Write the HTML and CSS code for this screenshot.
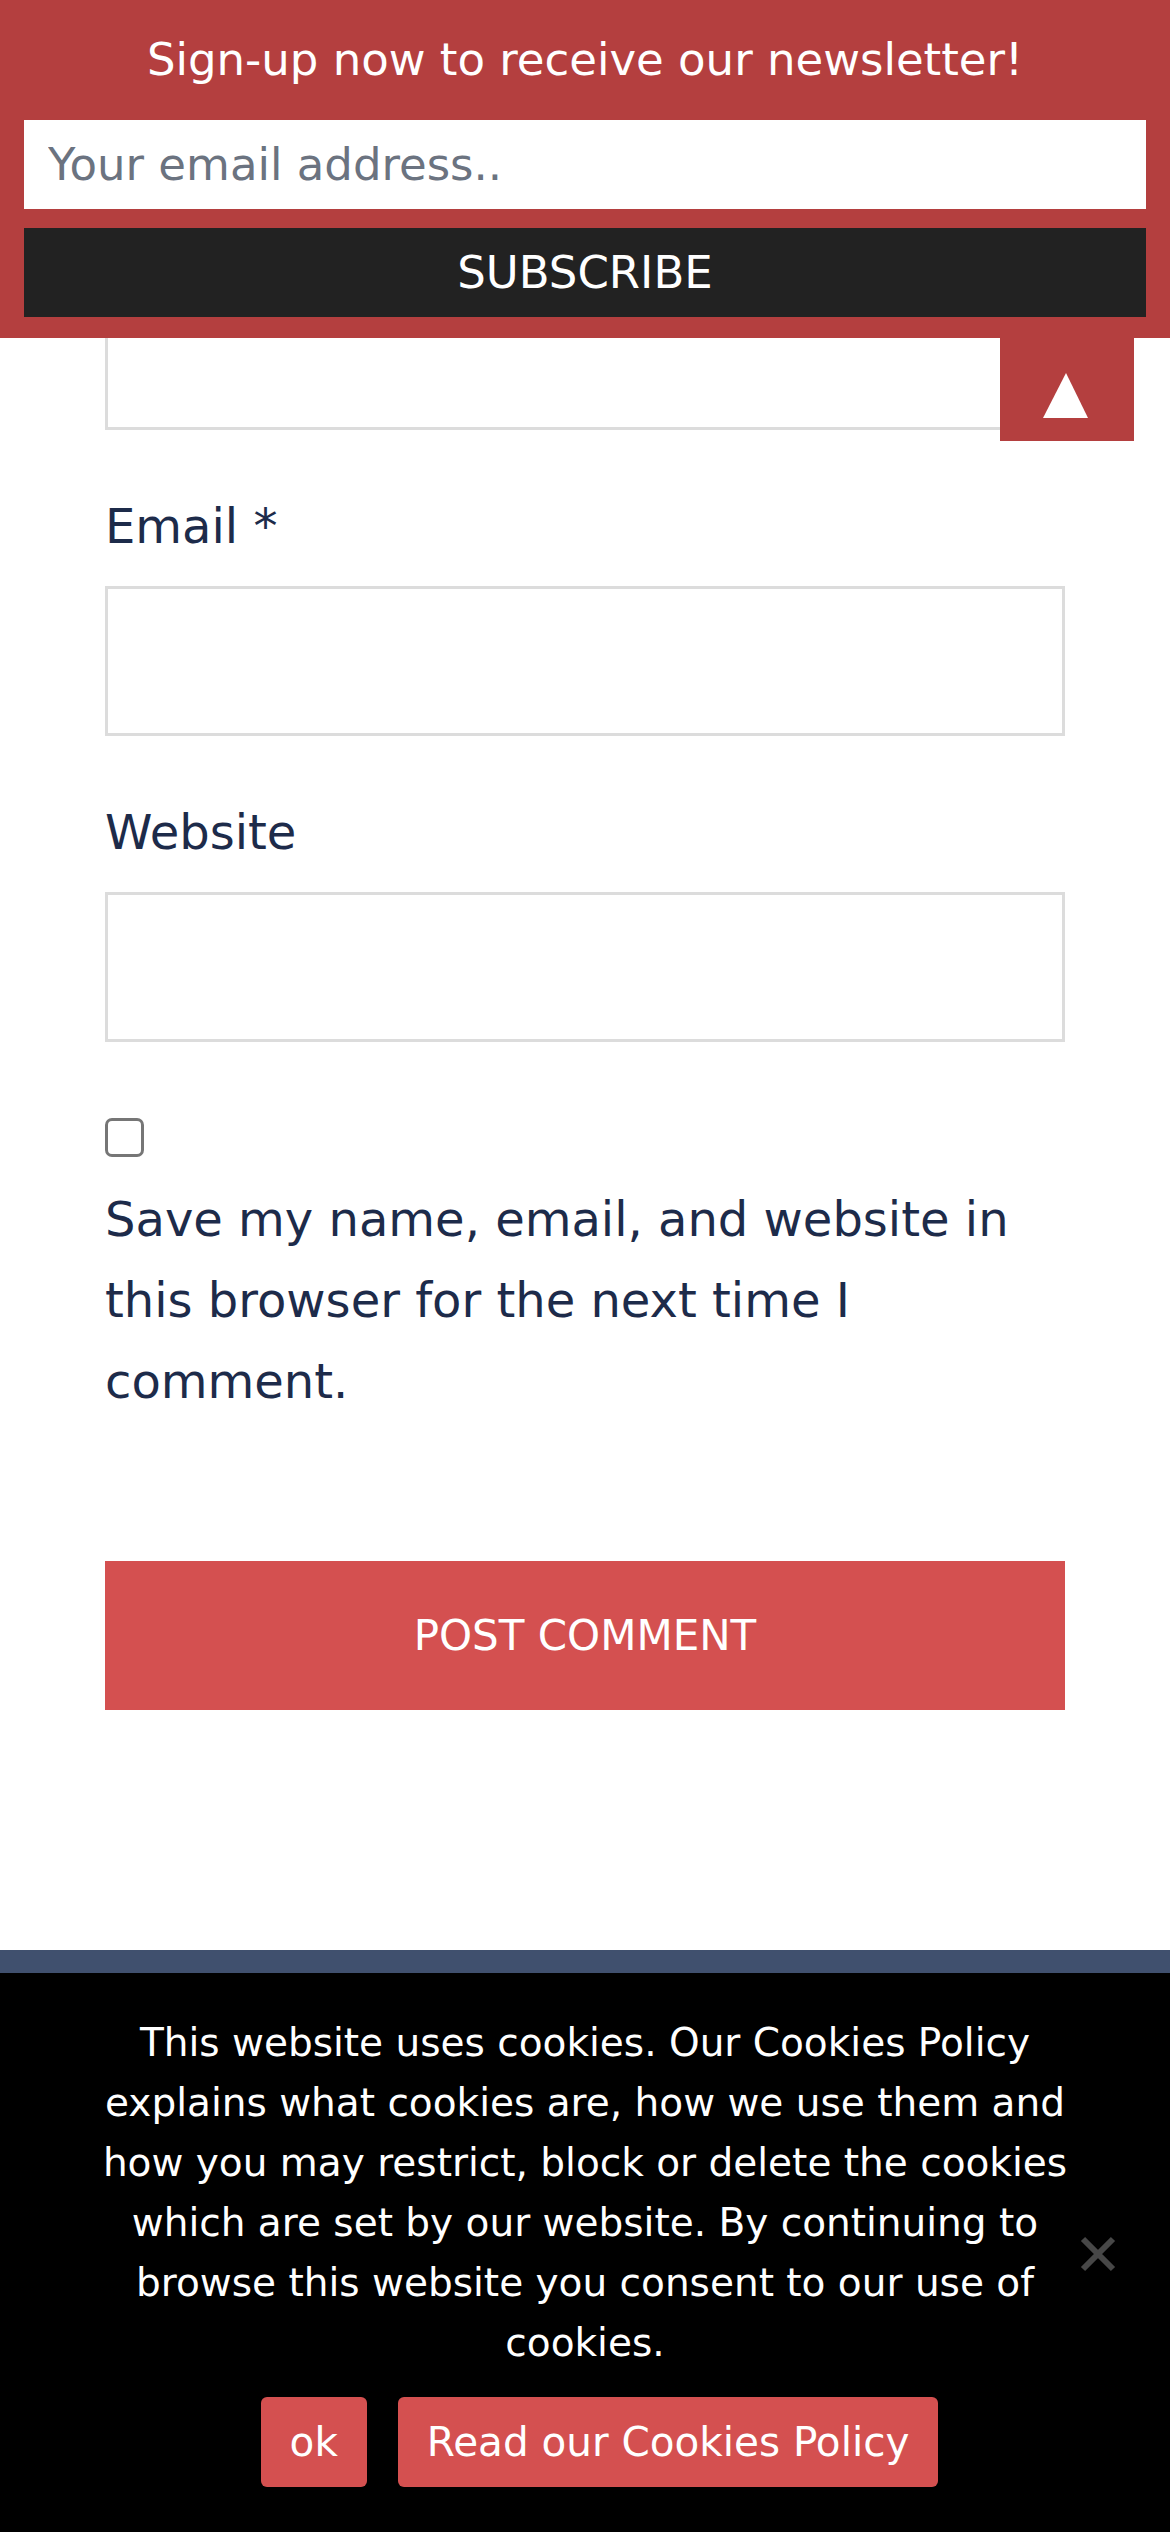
FILE: index.html
```html
<!DOCTYPE html>
<html lang="en">
<head>
<meta charset="utf-8">
<title>Leave a comment</title>
<link rel="stylesheet" href="styles.css">
</head>
<body>
<main class="comment-form">
  <div class="field field--first">
    <input class="text-input" type="text" aria-label="Name">
  </div>
  <div class="field">
    <label class="field-label" for="email">Email *</label>
    <input class="text-input" id="email" type="email">
  </div>
  <div class="field">
    <label class="field-label" for="url">Website</label>
    <input class="text-input" id="url" type="url">
  </div>
  <div class="consent">
    <input class="consent-box" id="consent" type="checkbox">
    <label class="consent-label" for="consent">Save my name, email, and website in this browser for the next time I comment.</label>
  </div>
  <button class="submit-btn" type="submit">POST COMMENT</button>
</main>

<footer class="site-footer"></footer>

<header class="newsletter">
  <p class="newsletter-title">Sign-up now to receive our newsletter!</p>
  <input class="newsletter-input" type="email" placeholder="Your email address..">
  <button class="newsletter-btn" type="button">SUBSCRIBE</button>
</header>
<a class="to-top" href="#" aria-label="Back to top">
  <svg class="to-top-icon" width="134" height="103" viewBox="0 0 134 103"><polygon points="66,35 88,80 43,80" fill="#ffffff"/></svg>
</a>

<div class="cookie-notice">
  <p class="cookie-text">This website uses cookies. Our Cookies Policy explains what cookies are, how we use them and how you may restrict, block or delete the cookies which are set by our website. By continuing to browse this website you consent to our use of cookies.</p>
  <div class="cookie-actions">
    <a class="cookie-btn" href="#">ok</a>
    <a class="cookie-btn" href="#">Read our Cookies Policy</a>
  </div>
  <span class="cookie-close" aria-label="close">
    <svg width="36" height="36" viewBox="0 0 36 36"><path d="M3 3 L33 33 M33 3 L3 33" stroke="#474747" stroke-width="6" fill="none"/></svg>
  </span>
</div>
</body>
</html>
```

FILE: styles.css
```css
* { box-sizing: border-box; }

html, body {
  margin: 0;
  padding: 0;
  background: #ffffff;
  font-family: "DejaVu Sans", "Noto Sans", sans-serif;
}

.comment-form {
  padding: 280px 105px 0;
  display: flex;
  flex-direction: column;
}

.field {
  margin-top: 56px;
  display: flex;
  flex-direction: column;
}

.field--first { margin-top: 0; }

.field-label {
  font-size: 48px;
  line-height: 81px;
  color: #1d2b4a;
  margin-bottom: 19px;
}

.text-input {
  display: block;
  width: 100%;
  height: 150px;
  border: 3px solid #dcdcdc;
  background: #ffffff;
  margin: 0;
  padding: 0 24px;
  font-size: 48px;
}

.consent {
  margin-top: 76px;
  display: flex;
  flex-direction: column;
}

.consent-box {
  appearance: none;
  -webkit-appearance: none;
  width: 39px;
  height: 39px;
  margin: 0;
  border: 3px solid #767676;
  border-radius: 7px;
  background: #ffffff;
}

.consent-label {
  margin-top: 22px;
  font-size: 48px;
  line-height: 81px;
  color: #1d2b4a;
}

.submit-btn {
  margin-top: 139px;
  height: 149px;
  width: 100%;
  border: none;
  background: #d45050;
  color: #ffffff;
  font-family: "DejaVu Sans", sans-serif;
  font-size: 42px;
  padding: 0;
}

.site-footer {
  margin-top: 240px;
  height: 620px;
  background: #40506e;
}

/* newsletter bar overlaying the top of the page */
.newsletter {
  position: absolute;
  top: 0;
  left: 0;
  right: 0;
  background: #b43f3f;
  padding: 24px 24px 21px;
  display: flex;
  flex-direction: column;
}

.newsletter-title {
  margin: 0 0 24px;
  text-align: center;
  color: #ffffff;
  font-size: 45px;
  line-height: 72px;
}

.newsletter-input {
  height: 89px;
  border: none;
  margin: 0;
  padding: 0 24px;
  background: #ffffff;
  font-family: "DejaVu Sans", sans-serif;
  font-size: 45px;
  color: #222;
}

.newsletter-input::placeholder { color: #6b7380; opacity: 1; }

.newsletter-btn {
  margin-top: 19px;
  height: 89px;
  border: none;
  background: #222222;
  color: #ffffff;
  font-family: "DejaVu Sans", sans-serif;
  font-size: 45px;
  padding: 0;
}

.to-top {
  position: absolute;
  top: 338px;
  left: 1000px;
  width: 134px;
  height: 103px;
  background: #b43f3f;
  display: block;
}

.to-top-icon { display: block; }

/* cookie notice overlay */
.cookie-notice {
  position: absolute;
  top: 1973px;
  left: 0;
  right: 0;
  height: 559px;
  background: #000000;
  padding: 40px 0 0;
  display: flex;
  flex-direction: column;
  align-items: center;
}

.cookie-text {
  margin: 0;
  width: 1000px;
  text-align: center;
  color: #ffffff;
  font-size: 39px;
  line-height: 60px;
}

.cookie-actions {
  margin-top: 24px;
  padding-left: 29px;
  display: flex;
  gap: 31px;
}

.cookie-btn {
  display: flex;
  align-items: center;
  height: 90px;
  padding: 0 29px;
  background: #d45050;
  border-radius: 6px;
  color: #ffffff;
  font-size: 40.5px;
  text-decoration: none;
}

.cookie-close {
  position: absolute;
  top: 263px;
  left: 1080px;
  width: 36px;
  height: 36px;
}

.cookie-close svg { display: block; }
```
